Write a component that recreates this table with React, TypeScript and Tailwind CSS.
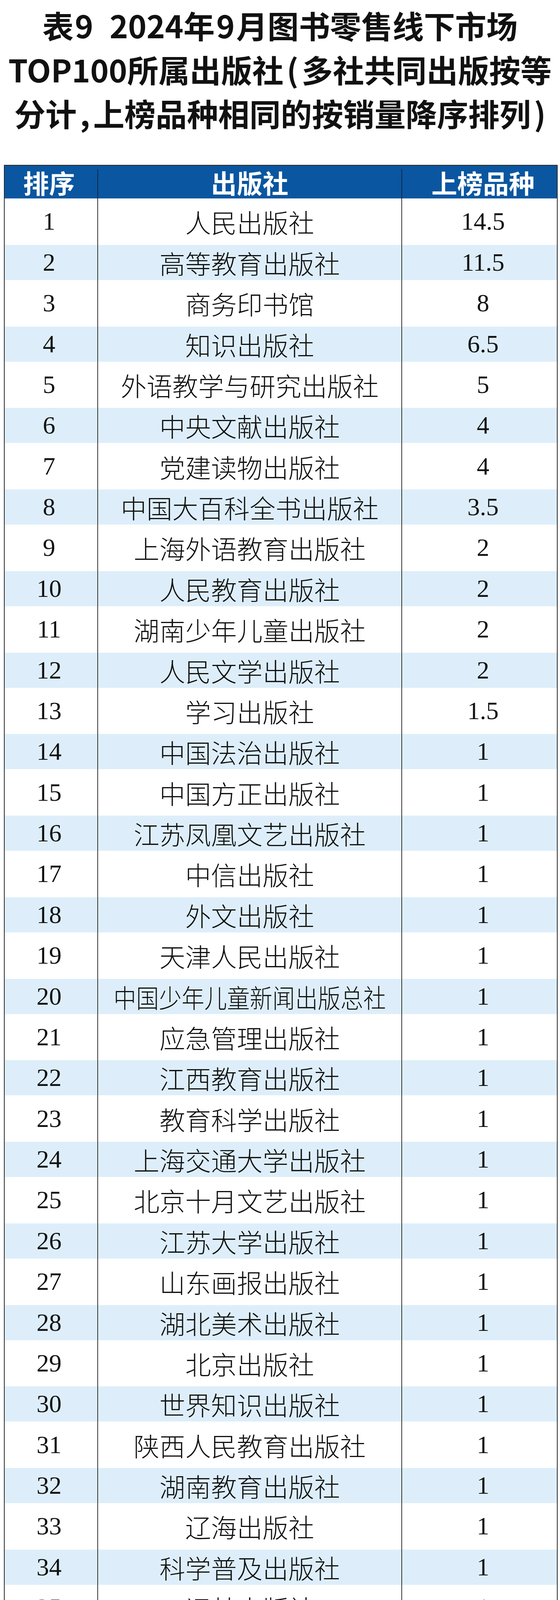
import React from "react";

const rows: [string, string][] = [
  ["人民出版社", "14.5"],
  ["高等教育出版社", "11.5"],
  ["商务印书馆", "8"],
  ["知识出版社", "6.5"],
  ["外语教学与研究出版社", "5"],
  ["中央文献出版社", "4"],
  ["党建读物出版社", "4"],
  ["中国大百科全书出版社", "3.5"],
  ["上海外语教育出版社", "2"],
  ["人民教育出版社", "2"],
  ["湖南少年儿童出版社", "2"],
  ["人民文学出版社", "2"],
  ["学习出版社", "1.5"],
  ["中国法治出版社", "1"],
  ["中国方正出版社", "1"],
  ["江苏凤凰文艺出版社", "1"],
  ["中信出版社", "1"],
  ["外文出版社", "1"],
  ["天津人民出版社", "1"],
  ["中国少年儿童新闻出版总社", "1"],
  ["应急管理出版社", "1"],
  ["江西教育出版社", "1"],
  ["教育科学出版社", "1"],
  ["上海交通大学出版社", "1"],
  ["北京十月文艺出版社", "1"],
  ["江苏大学出版社", "1"],
  ["山东画报出版社", "1"],
  ["湖北美术出版社", "1"],
  ["北京出版社", "1"],
  ["世界知识出版社", "1"],
  ["陕西人民教育出版社", "1"],
  ["湖南教育出版社", "1"],
  ["辽海出版社", "1"],
  ["科学普及出版社", "1"],
  ["译林出版社", "1"],
  ["首都师范大学出版社", "1"],
  ["二十一世纪出版社", "1"],
  ["广东旅游出版社", "1"],
  ["南海出版公司", "1"],
  ["航空工业出版社", "1"],
  ["浙江古籍出版社", "1"],
  ["湖北教育出版社", "1"],
  ["吉林出版集团股份有限公司", "1"],
  ["现代教育出版社", "1"],
  ["当代中国出版社", "0.5"],
  ["中共党史出版社", "0.5"],
  ["中国社会科学出版社", "0.5"],
  ["中国青年出版社", "0.5"],
  ["江苏人民出版社", "0.5"],
];

function Row({ rank, name, value }: { rank: number; name: string; value: string }) {
  const blue = rank % 2 === 0;
  const last = rank === rows.length;
  const long = name.length >= 12;
  const cellH = last ? "h-[84px] pt-[26px]" : "h-full";
  return (
    <div
      className={`flex ${last ? "h-[95px]" : blue ? "h-[90px]" : "h-[118.75px]"} ${
        blue ? "bg-[#ddeefa]" : "bg-white"
      }`}
    >
      <div
        className={`w-[239px] shrink-0 ${cellH} border-r-2 border-[#333333] flex items-center justify-center pr-[10px]`}
      >
        <span className="font-['Liberation_Serif',serif] text-[64px] leading-none text-[#111111]">
          {rank}
        </span>
      </div>
      <div
        className={`w-[778px] shrink-0 ${cellH} border-r-2 border-[#333333] flex items-center justify-center`}
      >
        <span
          className={`font-['Noto_Sans_CJK_SC',sans-serif] font-light text-[66px] leading-none text-[#111111] whitespace-nowrap ${
            long ? "inline-block scale-x-[0.88]" : ""
          }`}
        >
          {name}
        </span>
      </div>
      <div className={`flex-1 ${cellH} flex items-center justify-center pl-[18px]`}>
        <span className="font-['Liberation_Serif',serif] text-[64px] leading-none text-[#111111]">
          {value}
        </span>
      </div>
    </div>
  );
}

export default function App() {
  return (
    <div className="w-[1433px] bg-white pb-[2px]">
      <div className="h-[422px] pt-[7px] font-['Noto_Sans_CJK_SC',sans-serif] font-bold text-[80px] leading-[112.5px] text-[#111111] text-center">
        <div className="whitespace-nowrap">
          表<span className="ml-[3px]">9</span>
          <span className="inline-block w-[42px]"></span>2024年<span className="mx-[4px]">9</span>月图书零售线下市场
        </div>
        <div className="whitespace-nowrap">
          TOP100所属出版社<span className="mx-[8px]">(</span>多社共同出版按等
        </div>
        <div className="whitespace-nowrap">
          分计<span className="mx-[8px]">,</span>上榜品种相同的按销量降序排列
          <span className="ml-[8px]">)</span>
        </div>
      </div>
      <div className="ml-[10px] w-[1417px] border-2 border-[#2a2a2a]">
        <div className="flex h-[84px] bg-[#0a56a0] font-['Noto_Sans_CJK_SC',sans-serif] font-bold text-[66px] leading-none text-white">
          <div className="w-[237px] shrink-0 flex items-center justify-center pr-[10px]">排序</div>
          <div className="w-[2px] shrink-0 mt-[9px] bg-[#12284a]"></div>
          <div className="w-[776px] shrink-0 flex items-center justify-center">出版社</div>
          <div className="w-[2px] shrink-0 mt-[9px] bg-[#12284a]"></div>
          <div className="flex-1 flex items-center justify-center pl-[18px]">上榜品种</div>
        </div>
        {rows.map(([name, value], i) => (
          <Row key={i} rank={i + 1} name={name} value={value} />
        ))}
      </div>
    </div>
  );
}
